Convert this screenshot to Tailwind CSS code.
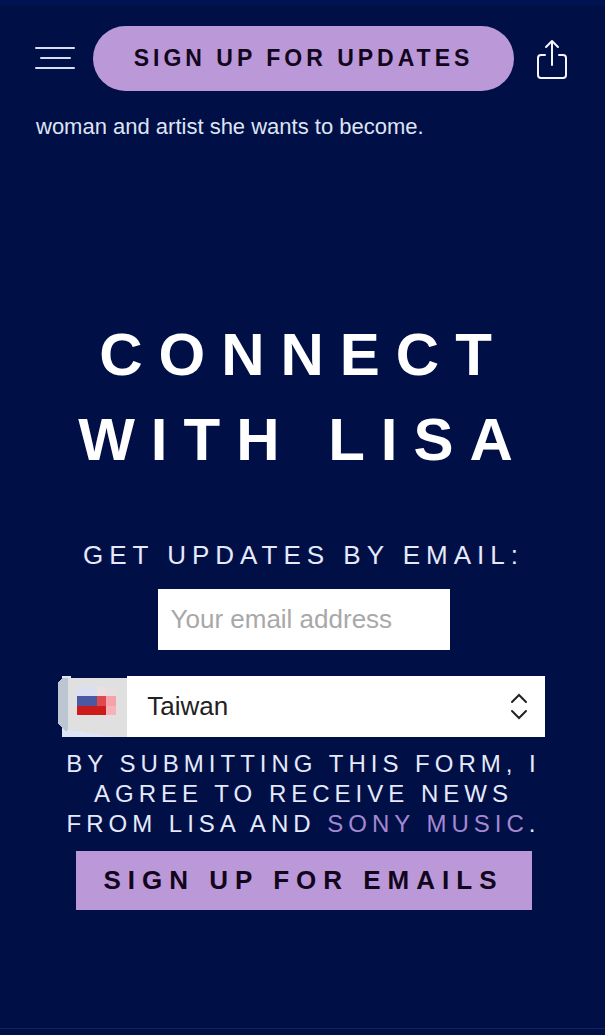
<!DOCTYPE html>
<html lang="en">
<head>
    <meta charset="UTF-8">
    <meta name="viewport" content="width=device-width, initial-scale=1.0">
    <title>LISA - Connect</title>
    <script src="https://cdn.jsdelivr.net/npm/@tailwindcss/browser@4"></script>
</head>
<body class="bg-[#001047] font-['Liberation_Sans',sans-serif] text-white min-h-screen flex flex-col border-t-6 border-[#00124f]">
    <header class="flex items-center justify-between pt-5 pl-[35px] pr-[37px]">
        <button type="button" aria-label="Menu" class="shrink-0">
            <svg class="w-10 h-6" viewBox="0 0 40 24" fill="none" stroke="#d9ddf5" stroke-width="2" stroke-linecap="round">
                <path d="M1 1h38M6 11h29M1 21h38"/>
            </svg>
        </button>
        <a href="#signup" class="h-[65px] px-[41px] rounded-full bg-[#bb98d8] text-[#12061c] text-[23px] font-bold tracking-[4px] whitespace-nowrap flex items-center">SIGN UP FOR UPDATES</a>
        <button type="button" aria-label="Share" class="shrink-0 pl-1">
            <svg class="w-8 h-10" viewBox="0 0 32 40" fill="none" stroke="#f4f5ff" stroke-width="2" stroke-linecap="round" stroke-linejoin="round">
                <path d="M9 16H5a3 3 0 0 0-3 3V36a3 3 0 0 0 3 3h22a3 3 0 0 0 3-3V19a3 3 0 0 0-3-3H23"/>
                <path d="M16 26V2M10 8l6-6 6 6"/>
            </svg>
        </button>
    </header>

    <main class="flex-1">
        <p class="mt-5 px-9 text-[22px] leading-8 text-[#dfe3f5]">woman and artist she wants to become.</p>

        <section id="signup" class="mt-[169px] pl-[2px] flex flex-col items-center text-center">
            <h2 class="text-[60px] leading-[85px] font-bold tracking-[16px]">CONNECT<br>WITH LISA</h2>

            <form class="mt-[57px] w-full flex flex-col items-center">
                <label for="email" class="text-[26px] leading-8 tracking-[6px] text-[#e6e9fa]">GET UPDATES BY EMAIL:</label>
                <input type="email" id="email" placeholder="Your email address" class="mt-[18px] w-[292px] h-[61px] px-[13px] bg-white text-[26px] text-[#222222] placeholder:text-[#a8a8a8] focus:outline-none">

                <div class="relative mt-[26px] w-4/5 h-[61px]">
                    <select id="country" aria-label="Country" class="appearance-none w-full h-full pl-[85px] pr-12 bg-white text-[26px] text-[#222222] focus:outline-none">
                        <option>Taiwan</option>
                    </select>
                    <!-- flag tile -->
                    <svg class="absolute -left-1 top-0 w-[70px] h-[61px] pointer-events-none" viewBox="0 0 70 61" shape-rendering="crispEdges">
                        <path d="M4 0h65v61H4z" fill="#dfe5f6"/>
                        <path d="M13 0h56v2H13z" fill="#001047"/>
                        <path d="M10 2h59v59H58L10 54z" fill="#e0e0e1"/>
                        <path d="M0 7l4-5h6v52l-2 1-8-7z" fill="#bcc6d3"/>
                        <path d="M19 11h20v9H19z" fill="#dcdff2"/>
                        <path d="M39 11h9v9h-9z" fill="#ecdfdd"/>
                        <path d="M48 11h10v9H48z" fill="#e6dedf"/>
                        <path d="M19 20h20v10H19z" fill="#4a59a2"/>
                        <path d="M39 20h9v10h-9z" fill="#e0484f"/>
                        <path d="M19 30h29v9H19z" fill="#cb1b1b"/>
                        <path d="M48 20h10v10H48z" fill="#f5a3a8"/>
                        <path d="M48 30h10v9H48z" fill="#f7b2b8"/>
                    </svg>
                    <svg class="absolute right-[17px] top-4 w-[18px] h-7 pointer-events-none" viewBox="0 0 18 28" fill="none" stroke="#222222" stroke-width="2" stroke-linecap="round">
                        <path d="M2 10l7-7 7 7M2 19l7 7 7-7"/>
                    </svg>
                </div>

                <p class="mt-3 max-w-[500px] text-[24px] leading-[30px] tracking-[5px] text-[#e6e9fa]">BY SUBMITTING THIS FORM, I AGREE TO RECEIVE NEWS FROM LISA AND <a href="#" class="text-[#a488d2]">SONY MUSIC</a>.</p>
                <button type="submit" class="mt-3 h-[59px] px-7 bg-[#bb98d8] text-[#12061c] text-[26px] font-bold tracking-[7px] whitespace-nowrap">SIGN UP FOR EMAILS</button>
            </form>
        </section>
    </main>

    <footer class="h-[7px] border-t border-[#14235a]"></footer>
</body>
</html>
